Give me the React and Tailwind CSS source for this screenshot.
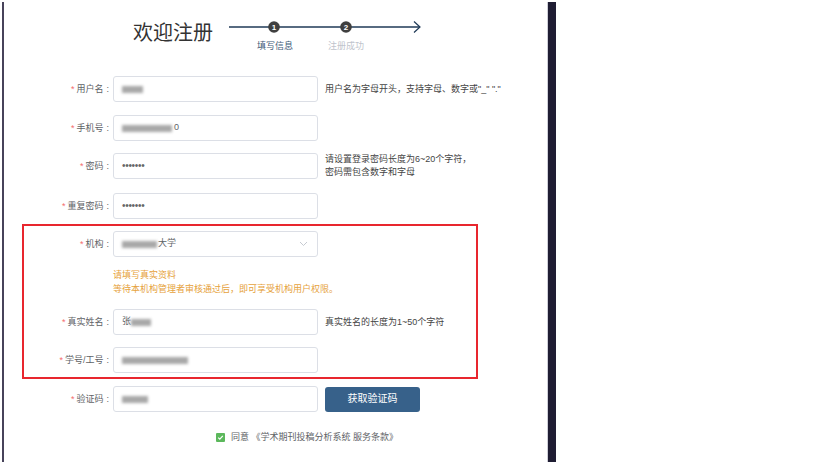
import React from "react";

const Blur = ({ w }) => (
  <span className={`inline-block h-[7px] bg-[#a8a8a8] blur-[1.5px] ${w}`} />
);

function Label({ text, cls }) {
  return (
    <div className={`text-right text-[9px] leading-[12px] text-[#606266] shrink-0 ${cls}`}>
      <span className="text-[#f56c6c] mr-[2px]">*</span>
      {text}
      <span className="ml-[3px]">:</span>
    </div>
  );
}

function Input({ children, select }) {
  return (
    <div className="ml-[4px] w-[205px] h-[26px] border border-[#dcdfe6] rounded-[3px] bg-white flex items-center pl-[8px] pr-[8px] text-[9px] text-[#606266] shrink-0">
      <div className="flex items-center flex-1">{children}</div>
      {select && (
        <svg width="9" height="6" viewBox="0 0 9 6" className="mr-[1px]">
          <polyline points="1,1 4.5,4.5 8,1" fill="none" stroke="#c0c4cc" strokeWidth="0.9" />
        </svg>
      )}
    </div>
  );
}

function Row({ label, labelCls = "w-[105px]", children, hint, select, extra, cls = "" }) {
  return (
    <div className={`flex items-center ${cls}`}>
      <Label text={label} cls={labelCls} />
      <Input select={select}>{children}</Input>
      {hint && (
        <div className="ml-[7px] text-[9px] leading-[13px] text-[#444]">{hint}</div>
      )}
      {extra}
    </div>
  );
}

const Dots = () => (
  <span className="text-[10px] leading-[10px] text-[#666] tracking-[-0.3px]">•••••••</span>
);

export default function App() {
  return (
    <div className="w-[819px] h-[464px] bg-white overflow-hidden font-['Liberation_Sans','Noto_Sans_CJK_SC',sans-serif]">
      <div className="flex h-full py-[2px] pl-[2px]">
        <div className="w-[545px] border-l-2 border-[#47435a] flex flex-col">
          {/* header */}
          <div className="flex items-start pt-[18px]">
            <div className="pl-[129px] text-[20px] leading-[26px] text-[#333]">欢迎注册</div>
            <div className="ml-[16px] flex flex-col">
              <svg width="194" height="14" viewBox="0 0 194 14">
                <line x1="0" y1="7" x2="191" y2="7" stroke="#1f3a57" strokeWidth="1.5" />
                <polyline points="185,1.5 191,7 185,12.5" fill="none" stroke="#1f3a57" strokeWidth="1.2" />
                <circle cx="45" cy="7" r="5.8" fill="#3f3f3f" />
                <text x="45" y="10" textAnchor="middle" fontSize="8" fontWeight="700" fill="#fff" fontFamily="Liberation Sans, sans-serif">1</text>
                <circle cx="117" cy="7" r="5.8" fill="#3f3f3f" />
                <text x="117" y="10" textAnchor="middle" fontSize="8" fontWeight="700" fill="#fff" fontFamily="Liberation Sans, sans-serif">2</text>
              </svg>
              <div className="flex mt-[6px] text-[9px] leading-[12px]">
                <span className="ml-[28px] text-[#3d5a78]">填写信息</span>
                <span className="ml-[35px] text-[#c0c4cc]">注册成功</span>
              </div>
            </div>
          </div>

          {/* form */}
          <Row
            cls="mt-[24px]"
            label="用户名"
            hint={'用户名为字母开头，支持字母、数字或"_" "."'}
          >
            <Blur w="w-[21px]" />
          </Row>
          <Row cls="mt-[13px]" label="手机号">
            <Blur w="w-[50px]" />
            <span className="ml-[2px]">0</span>
          </Row>
          <Row
            cls="mt-[12px]"
            label="密码"
            hint={
              <>
                请设置登录密码长度为6~20个字符，
                <br />
                密码需包含数字和字母
              </>
            }
          >
            <Dots />
          </Row>
          <Row cls="mt-[14px]" label="重复密码">
            <Dots />
          </Row>

          {/* highlighted block */}
          <div className="mt-[5px] ml-[18px] w-[456px] border-2 border-[#e8262e] pt-[5px] pb-[4px]">
            <Row labelCls="w-[85px]" label="机构" select>
              <Blur w="w-[35px]" />
              <span className="ml-[1px]">大学</span>
            </Row>
            <div className="mt-[11px] pl-[89px] text-[9px] leading-[14px] text-[#e6a23c]">
              请填写真实资料
              <br />
              等待本机构管理者审核通过后，即可享受机构用户权限。
            </div>
            <Row
              cls="mt-[13px]"
              labelCls="w-[85px]"
              label="真实姓名"
              hint="真实姓名的长度为1~50个字符"
            >
              <span>张</span>
              <Blur w="w-[20px]" />
            </Row>
            <Row cls="mt-[12px]" labelCls="w-[85px]" label="学号/工号">
              <Blur w="w-[66px]" />
            </Row>
          </div>

          <Row
            cls="mt-[7px]"
            label="验证码"
            extra={
              <button className="ml-[7px] w-[95px] h-[25px] rounded-[3px] bg-[#37618a] text-white text-[10px] leading-[12px]">
                获取验证码
              </button>
            }
          >
            <Blur w="w-[26px]" />
          </Row>

          <div className="mt-[19px] pl-[212px] flex items-center text-[9px] leading-[12px] text-[#606266]">
            <span className="w-[9px] h-[9px] rounded-[1px] bg-[#5cb85c] flex items-center justify-center">
              <svg width="7" height="7" viewBox="0 0 7 7">
                <polyline points="1.2,3.6 2.8,5.2 5.8,1.8" fill="none" stroke="#fff" strokeWidth="1.2" />
              </svg>
            </span>
            <span className="ml-[6px]">同意 《学术期刊投稿分析系统 服务条款》</span>
          </div>
        </div>
        <div className="w-[9px] border-l border-[#cfcfd8] bg-[#1f1d33]" />
      </div>
    </div>
  );
}
